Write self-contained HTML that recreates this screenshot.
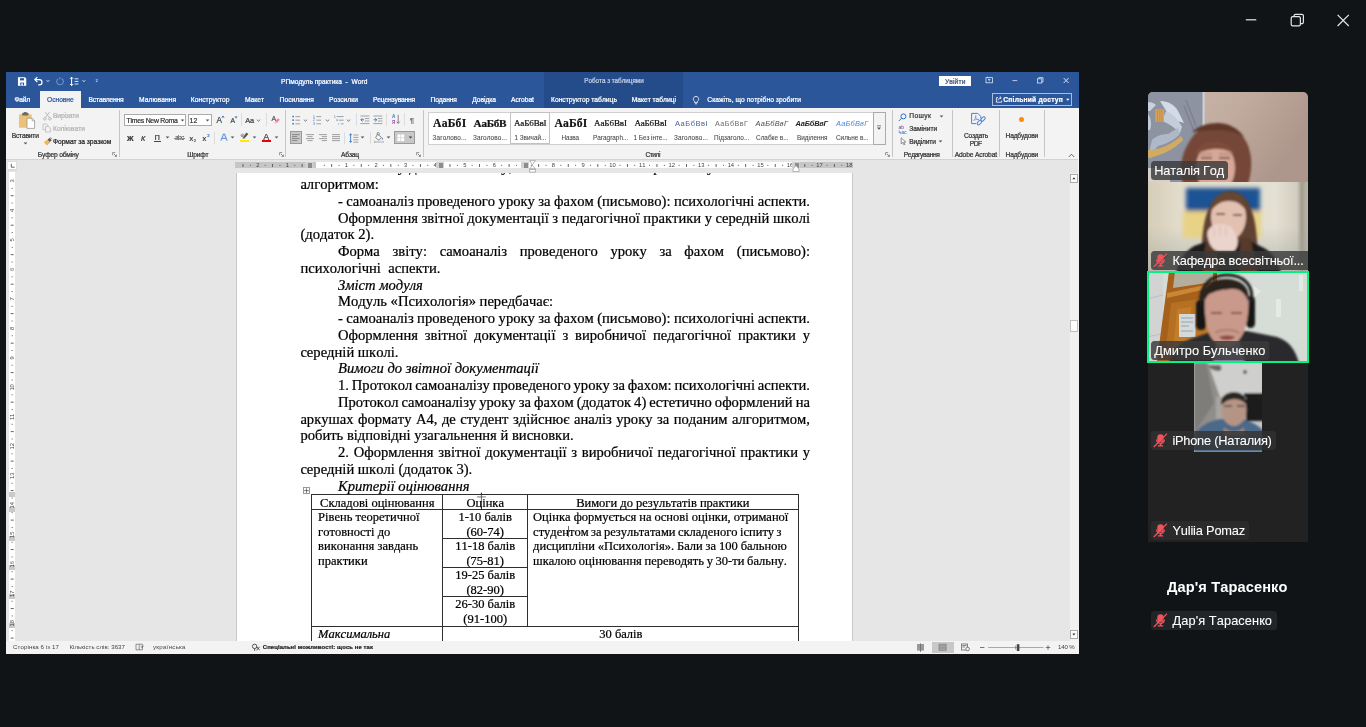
<!DOCTYPE html>
<html lang="uk"><head><meta charset="utf-8"><title>Zoom</title><style>
html,body{margin:0;padding:0;}
body{width:1366px;height:727px;background:#111417;overflow:hidden;position:relative;font-family:"Liberation Sans",sans-serif;font-kerning:none;font-variant-ligatures:none;}
#root{position:absolute;left:0;top:0;width:1366px;height:727px;will-change:transform;}
.t{position:absolute;white-space:pre;line-height:1;-webkit-text-stroke:.22px currentColor;}
.r{position:absolute;display:block;}
.j{position:absolute;white-space:normal;text-align:justify;text-align-last:justify;line-height:1;font-family:"Liberation Serif",serif;color:#000;}
</style></head><body><div id="root">
<svg class="r" style="left:1240.00px;top:8.00px;" width="116" height="24" viewBox="0 0 116 24"><g fill="none" stroke="#e6e6e6" stroke-width="1.2"><path d="M5.8 11.8H16.3"/><rect x="51.2" y="8.6" width="9.2" height="9.2" rx="1.6"/><path d="M54 8.4V7.9a1.6 1.6 0 0 1 1.6-1.6h6.2a1.6 1.6 0 0 1 1.6 1.6v6.2a1.6 1.6 0 0 1-1.6 1.6h-1.2"/><path d="M97.6 6.8L108.8 18M108.8 6.8L97.6 18"/></g></svg>
<div class="r" style="left:6.00px;top:72.00px;width:1073.00px;height:582.00px;background:#e6e6e6;"></div>
<div class="r" style="left:6.00px;top:72.00px;width:1073.00px;height:36.00px;background:#2b579a;"></div>
<div class="r" style="left:544.00px;top:72.00px;width:139.00px;height:36.00px;background:#254c8a;"></div>
<div class="r" style="left:6.00px;top:108.00px;width:1073.00px;height:51.00px;background:#f3f3f3;"></div>
<div class="r" style="left:6.00px;top:158.60px;width:1073.00px;height:1.00px;background:#d2d2d2;"></div>
<div class="r" style="left:40.00px;top:91.00px;width:41.00px;height:17.50px;background:#f3f3f3;"></div>
<div class="r" style="left:6.00px;top:641.00px;width:1073.00px;height:13.00px;background:#f3f3f3;"></div>
<div class="r" style="left:1078.00px;top:108.00px;width:1.00px;height:533.00px;background:#f6f6f6;"></div>
<div class="r" style="left:235.50px;top:173.00px;width:617.80px;height:468.00px;background:#ffffff;border-left:1px solid #c8c8c8;border-right:1px solid #c8c8c8;box-sizing:border-box;"></div>
<div class="r" style="left:234.50px;top:162.20px;width:618.50px;height:6.20px;background:#c6c6c6;"></div>
<div class="r" style="left:316.40px;top:162.20px;width:475.50px;height:6.20px;background:#ffffff;"></div>
<svg class="r" style="left:234.50px;top:162.20px;font-family:&quot;Liberation Sans&quot;,sans-serif;" width="618.5" height="6" viewBox="0 0 618.5 6"><rect x="7.52" y="2.0" width="0.9" height="3.0" fill="#555"/><rect x="14.92" y="2.8" width="0.9" height="1.2" fill="#666"/><text x="22.76" y="5.1" font-size="5.8" text-anchor="middle" fill="#444">2</text><rect x="29.70" y="2.8" width="0.9" height="1.2" fill="#666"/><rect x="37.09" y="2.0" width="0.9" height="3.0" fill="#555"/><rect x="44.49" y="2.8" width="0.9" height="1.2" fill="#666"/><text x="52.33" y="5.1" font-size="5.8" text-anchor="middle" fill="#444">1</text><rect x="59.27" y="2.8" width="0.9" height="1.2" fill="#666"/><rect x="66.66" y="2.0" width="0.9" height="3.0" fill="#555"/><rect x="74.06" y="2.8" width="0.9" height="1.2" fill="#666"/><rect x="88.84" y="2.8" width="0.9" height="1.2" fill="#666"/><rect x="96.23" y="2.0" width="0.9" height="3.0" fill="#555"/><rect x="103.63" y="2.8" width="0.9" height="1.2" fill="#666"/><text x="111.47" y="5.1" font-size="5.8" text-anchor="middle" fill="#444">1</text><rect x="118.41" y="2.8" width="0.9" height="1.2" fill="#666"/><rect x="125.80" y="2.0" width="0.9" height="3.0" fill="#555"/><rect x="133.20" y="2.8" width="0.9" height="1.2" fill="#666"/><text x="141.04" y="5.1" font-size="5.8" text-anchor="middle" fill="#444">2</text><rect x="147.98" y="2.8" width="0.9" height="1.2" fill="#666"/><rect x="155.38" y="2.0" width="0.9" height="3.0" fill="#555"/><rect x="162.77" y="2.8" width="0.9" height="1.2" fill="#666"/><text x="170.61" y="5.1" font-size="5.8" text-anchor="middle" fill="#444">3</text><rect x="177.55" y="2.8" width="0.9" height="1.2" fill="#666"/><rect x="184.94" y="2.0" width="0.9" height="3.0" fill="#555"/><rect x="192.34" y="2.8" width="0.9" height="1.2" fill="#666"/><text x="200.18" y="5.1" font-size="5.8" text-anchor="middle" fill="#444">4</text><rect x="207.12" y="2.8" width="0.9" height="1.2" fill="#666"/><rect x="214.51" y="2.0" width="0.9" height="3.0" fill="#555"/><rect x="221.91" y="2.8" width="0.9" height="1.2" fill="#666"/><text x="229.75" y="5.1" font-size="5.8" text-anchor="middle" fill="#444">5</text><rect x="236.69" y="2.8" width="0.9" height="1.2" fill="#666"/><rect x="244.08" y="2.0" width="0.9" height="3.0" fill="#555"/><rect x="251.48" y="2.8" width="0.9" height="1.2" fill="#666"/><text x="259.32" y="5.1" font-size="5.8" text-anchor="middle" fill="#444">6</text><rect x="266.26" y="2.8" width="0.9" height="1.2" fill="#666"/><rect x="273.66" y="2.0" width="0.9" height="3.0" fill="#555"/><rect x="281.05" y="2.8" width="0.9" height="1.2" fill="#666"/><text x="288.89" y="5.1" font-size="5.8" text-anchor="middle" fill="#444">7</text><rect x="295.83" y="2.8" width="0.9" height="1.2" fill="#666"/><rect x="303.22" y="2.0" width="0.9" height="3.0" fill="#555"/><rect x="310.62" y="2.8" width="0.9" height="1.2" fill="#666"/><text x="318.46" y="5.1" font-size="5.8" text-anchor="middle" fill="#444">8</text><rect x="325.40" y="2.8" width="0.9" height="1.2" fill="#666"/><rect x="332.80" y="2.0" width="0.9" height="3.0" fill="#555"/><rect x="340.19" y="2.8" width="0.9" height="1.2" fill="#666"/><text x="348.03" y="5.1" font-size="5.8" text-anchor="middle" fill="#444">9</text><rect x="354.97" y="2.8" width="0.9" height="1.2" fill="#666"/><rect x="362.37" y="2.0" width="0.9" height="3.0" fill="#555"/><rect x="369.76" y="2.8" width="0.9" height="1.2" fill="#666"/><text x="377.60" y="5.1" font-size="5.8" text-anchor="middle" fill="#444">10</text><rect x="384.54" y="2.8" width="0.9" height="1.2" fill="#666"/><rect x="391.94" y="2.0" width="0.9" height="3.0" fill="#555"/><rect x="399.33" y="2.8" width="0.9" height="1.2" fill="#666"/><text x="407.17" y="5.1" font-size="5.8" text-anchor="middle" fill="#444">11</text><rect x="414.11" y="2.8" width="0.9" height="1.2" fill="#666"/><rect x="421.50" y="2.0" width="0.9" height="3.0" fill="#555"/><rect x="428.90" y="2.8" width="0.9" height="1.2" fill="#666"/><text x="436.74" y="5.1" font-size="5.8" text-anchor="middle" fill="#444">12</text><rect x="443.68" y="2.8" width="0.9" height="1.2" fill="#666"/><rect x="451.07" y="2.0" width="0.9" height="3.0" fill="#555"/><rect x="458.47" y="2.8" width="0.9" height="1.2" fill="#666"/><text x="466.31" y="5.1" font-size="5.8" text-anchor="middle" fill="#444">13</text><rect x="473.25" y="2.8" width="0.9" height="1.2" fill="#666"/><rect x="480.65" y="2.0" width="0.9" height="3.0" fill="#555"/><rect x="488.04" y="2.8" width="0.9" height="1.2" fill="#666"/><text x="495.88" y="5.1" font-size="5.8" text-anchor="middle" fill="#444">14</text><rect x="502.82" y="2.8" width="0.9" height="1.2" fill="#666"/><rect x="510.21" y="2.0" width="0.9" height="3.0" fill="#555"/><rect x="517.61" y="2.8" width="0.9" height="1.2" fill="#666"/><text x="525.45" y="5.1" font-size="5.8" text-anchor="middle" fill="#444">15</text><rect x="532.39" y="2.8" width="0.9" height="1.2" fill="#666"/><rect x="539.78" y="2.0" width="0.9" height="3.0" fill="#555"/><rect x="547.18" y="2.8" width="0.9" height="1.2" fill="#666"/><text x="555.02" y="5.1" font-size="5.8" text-anchor="middle" fill="#444">16</text><rect x="561.96" y="2.8" width="0.9" height="1.2" fill="#666"/><rect x="569.36" y="2.0" width="0.9" height="3.0" fill="#555"/><rect x="576.75" y="2.8" width="0.9" height="1.2" fill="#666"/><text x="584.59" y="5.1" font-size="5.8" text-anchor="middle" fill="#444">17</text><rect x="591.53" y="2.8" width="0.9" height="1.2" fill="#666"/><rect x="598.92" y="2.0" width="0.9" height="3.0" fill="#555"/><rect x="606.32" y="2.8" width="0.9" height="1.2" fill="#666"/><text x="614.16" y="5.1" font-size="5.8" text-anchor="middle" fill="#444">18</text></svg>
<div class="r" style="left:304.60px;top:162.20px;width:8.40px;height:6.20px;background:#d2d2d2;"></div>
<div class="r" style="left:307.90px;top:163.10px;width:4.20px;height:4.50px;background:#8c8c8c;"></div>
<div class="r" style="left:435.80px;top:162.20px;width:8.40px;height:6.20px;background:#d2d2d2;"></div>
<div class="r" style="left:439.10px;top:163.10px;width:4.20px;height:4.50px;background:#8c8c8c;"></div>
<div class="r" style="left:520.60px;top:162.20px;width:8.40px;height:6.20px;background:#d2d2d2;"></div>
<div class="r" style="left:523.90px;top:163.10px;width:4.20px;height:4.50px;background:#8c8c8c;"></div>
<div class="r" style="left:791.60px;top:162.20px;width:8.40px;height:6.20px;background:#d2d2d2;"></div>
<div class="r" style="left:794.90px;top:163.10px;width:4.20px;height:4.50px;background:#8c8c8c;"></div>
<svg class="r" style="left:528.70px;top:160.30px;" width="7" height="13" viewBox="0 0 7 13"><path d="M.6 .6h5.800L3.500 4.800zM3.500 5.400L6.400 8.800H.6zM.6 9.400h5.800v2.800H.6z" fill="#fdfdfd" stroke="#8a8a8a" stroke-width=".6"/></svg>
<svg class="r" style="left:791.50px;top:165.00px;" width="8" height="8" viewBox="0 0 8 8"><path d="M4 .6L7 4v2.6H1V4z" fill="#fdfdfd" stroke="#8a8a8a" stroke-width=".6"/></svg>
<div class="r" style="left:7.60px;top:160.80px;width:9.90px;height:9.80px;background:#dcdcdc;"></div>
<div class="r" style="left:8.40px;top:161.60px;width:7.80px;height:7.80px;background:#ffffff;"></div>
<svg class="r" style="left:9.60px;top:163.00px;" width="6" height="6" viewBox="0 0 6 6"><path d="M1.3 .8V4.2H4.6" stroke="#666" stroke-width="1" fill="none"/></svg>
<div class="r" style="left:8.80px;top:171.50px;width:6.20px;height:469.50px;background:#ffffff;"></div>
<div class="r" style="left:8.80px;top:491.80px;width:6.20px;height:5.20px;background:#c9c9c9;"></div>
<div class="r" style="left:8.80px;top:507.10px;width:6.20px;height:5.20px;background:#c9c9c9;"></div>
<div class="r" style="left:8.80px;top:535.80px;width:6.20px;height:5.20px;background:#c9c9c9;"></div>
<div class="r" style="left:8.80px;top:564.80px;width:6.20px;height:5.20px;background:#c9c9c9;"></div>
<div class="r" style="left:8.80px;top:593.60px;width:6.20px;height:5.20px;background:#c9c9c9;"></div>
<div class="r" style="left:8.80px;top:623.20px;width:6.20px;height:5.20px;background:#c9c9c9;"></div>
<svg class="r" style="left:8.80px;top:171.50px;font-family:&quot;Liberation Sans&quot;,sans-serif;" width="6.2" height="469.5" viewBox="0 0 6.2 469.5"><text transform="translate(5.0 8.50) rotate(-90)" font-size="5.8" text-anchor="middle" fill="#444">3</text><rect x="2.6" y="15.44" width="1.2" height="0.9" fill="#666"/><rect x="1.7" y="22.83" width="3.0" height="0.9" fill="#555"/><rect x="2.6" y="30.21" width="1.2" height="0.9" fill="#666"/><text transform="translate(5.0 38.05) rotate(-90)" font-size="5.8" text-anchor="middle" fill="#444">4</text><rect x="2.6" y="44.99" width="1.2" height="0.9" fill="#666"/><rect x="1.7" y="52.37" width="3.0" height="0.9" fill="#555"/><rect x="2.6" y="59.76" width="1.2" height="0.9" fill="#666"/><text transform="translate(5.0 67.60) rotate(-90)" font-size="5.8" text-anchor="middle" fill="#444">5</text><rect x="2.6" y="74.54" width="1.2" height="0.9" fill="#666"/><rect x="1.7" y="81.92" width="3.0" height="0.9" fill="#555"/><rect x="2.6" y="89.31" width="1.2" height="0.9" fill="#666"/><text transform="translate(5.0 97.15) rotate(-90)" font-size="5.8" text-anchor="middle" fill="#444">6</text><rect x="2.6" y="104.09" width="1.2" height="0.9" fill="#666"/><rect x="1.7" y="111.48" width="3.0" height="0.9" fill="#555"/><rect x="2.6" y="118.86" width="1.2" height="0.9" fill="#666"/><text transform="translate(5.0 126.70) rotate(-90)" font-size="5.8" text-anchor="middle" fill="#444">7</text><rect x="2.6" y="133.64" width="1.2" height="0.9" fill="#666"/><rect x="1.7" y="141.03" width="3.0" height="0.9" fill="#555"/><rect x="2.6" y="148.41" width="1.2" height="0.9" fill="#666"/><text transform="translate(5.0 156.25) rotate(-90)" font-size="5.8" text-anchor="middle" fill="#444">8</text><rect x="2.6" y="163.19" width="1.2" height="0.9" fill="#666"/><rect x="1.7" y="170.57" width="3.0" height="0.9" fill="#555"/><rect x="2.6" y="177.96" width="1.2" height="0.9" fill="#666"/><text transform="translate(5.0 185.80) rotate(-90)" font-size="5.8" text-anchor="middle" fill="#444">9</text><rect x="2.6" y="192.74" width="1.2" height="0.9" fill="#666"/><rect x="1.7" y="200.13" width="3.0" height="0.9" fill="#555"/><rect x="2.6" y="207.51" width="1.2" height="0.9" fill="#666"/><text transform="translate(5.0 215.35) rotate(-90)" font-size="5.8" text-anchor="middle" fill="#444">10</text><rect x="2.6" y="222.29" width="1.2" height="0.9" fill="#666"/><rect x="1.7" y="229.68" width="3.0" height="0.9" fill="#555"/><rect x="2.6" y="237.06" width="1.2" height="0.9" fill="#666"/><text transform="translate(5.0 244.90) rotate(-90)" font-size="5.8" text-anchor="middle" fill="#444">11</text><rect x="2.6" y="251.84" width="1.2" height="0.9" fill="#666"/><rect x="1.7" y="259.23" width="3.0" height="0.9" fill="#555"/><rect x="2.6" y="266.61" width="1.2" height="0.9" fill="#666"/><text transform="translate(5.0 274.45) rotate(-90)" font-size="5.8" text-anchor="middle" fill="#444">12</text><rect x="2.6" y="281.39" width="1.2" height="0.9" fill="#666"/><rect x="1.7" y="288.78" width="3.0" height="0.9" fill="#555"/><rect x="2.6" y="296.16" width="1.2" height="0.9" fill="#666"/><text transform="translate(5.0 304.00) rotate(-90)" font-size="5.8" text-anchor="middle" fill="#444">13</text><rect x="2.6" y="310.94" width="1.2" height="0.9" fill="#666"/><rect x="1.7" y="318.33" width="3.0" height="0.9" fill="#555"/><rect x="2.6" y="325.71" width="1.2" height="0.9" fill="#666"/><text transform="translate(5.0 333.55) rotate(-90)" font-size="5.8" text-anchor="middle" fill="#444">14</text><rect x="2.6" y="340.49" width="1.2" height="0.9" fill="#666"/><rect x="1.7" y="347.88" width="3.0" height="0.9" fill="#555"/><rect x="2.6" y="355.26" width="1.2" height="0.9" fill="#666"/><text transform="translate(5.0 363.10) rotate(-90)" font-size="5.8" text-anchor="middle" fill="#444">15</text><rect x="2.6" y="370.04" width="1.2" height="0.9" fill="#666"/><rect x="1.7" y="377.43" width="3.0" height="0.9" fill="#555"/><rect x="2.6" y="384.81" width="1.2" height="0.9" fill="#666"/><text transform="translate(5.0 392.65) rotate(-90)" font-size="5.8" text-anchor="middle" fill="#444">16</text><rect x="2.6" y="399.59" width="1.2" height="0.9" fill="#666"/><rect x="1.7" y="406.97" width="3.0" height="0.9" fill="#555"/><rect x="2.6" y="414.36" width="1.2" height="0.9" fill="#666"/><text transform="translate(5.0 422.20) rotate(-90)" font-size="5.8" text-anchor="middle" fill="#444">17</text><rect x="2.6" y="429.14" width="1.2" height="0.9" fill="#666"/><rect x="1.7" y="436.53" width="3.0" height="0.9" fill="#555"/><rect x="2.6" y="443.91" width="1.2" height="0.9" fill="#666"/><text transform="translate(5.0 451.75) rotate(-90)" font-size="5.8" text-anchor="middle" fill="#444">18</text><rect x="2.6" y="458.69" width="1.2" height="0.9" fill="#666"/><rect x="1.7" y="466.08" width="3.0" height="0.9" fill="#555"/></svg>
<div class="r" style="left:1069.50px;top:173.00px;width:9.00px;height:468.00px;background:#f1f1f1;"></div>
<div class="r" style="left:1070.20px;top:174.20px;width:7.80px;height:8.40px;background:#ffffff;border:1px solid #ababab;box-sizing:border-box;"></div>
<svg class="r" style="left:1070.20px;top:174.20px;" width="7.8" height="8.4" viewBox="0 0 7.8 8.4"><path d="M2.3 5.2L3.9 3.2L5.5 5.2z" fill="#333"/></svg>
<div class="r" style="left:1070.20px;top:630.20px;width:7.80px;height:8.80px;background:#ffffff;border:1px solid #ababab;box-sizing:border-box;"></div>
<svg class="r" style="left:1070.20px;top:630.20px;" width="7.8" height="8.8" viewBox="0 0 7.8 8.8"><path d="M2.3 3.5L3.9 5.5L5.5 3.5z" fill="#333"/></svg>
<div class="r" style="left:1070.20px;top:320.00px;width:7.80px;height:12.00px;background:#ffffff;border:1px solid #c0c0c0;box-sizing:border-box;"></div>
<div class="r" style="left:0;top:173px;width:1366px;height:5px;overflow:hidden;">
<span class="t" style="left:300.40px;top:-13.00px;font-size:14.60px;color:#000;font-family:'Liberation Serif', serif;word-spacing:0.371px;">Він має внести у два самоаналізу, а потім вона сама обирала тему заняття за нею</span>
</div>
<span class="t" style="left:300.40px;top:177.00px;font-size:14.60px;color:#000;font-family:'Liberation Serif', serif;">алгоритмом:</span>
<span class="t" style="left:338.00px;top:194.00px;font-size:14.60px;color:#000;font-family:'Liberation Serif', serif;word-spacing:-0.210px;">- самоаналіз проведеного уроку за фахом (письмово): психологічні аспекти.</span>
<span class="t" style="left:338.00px;top:211.00px;font-size:14.60px;color:#000;font-family:'Liberation Serif', serif;word-spacing:-0.049px;">Оформлення звітної документації з педагогічної практики у середній школі</span>
<span class="t" style="left:300.40px;top:227.00px;font-size:14.60px;color:#000;font-family:'Liberation Serif', serif;">(додаток 2).</span>
<span class="t" style="left:338.00px;top:244.00px;font-size:14.60px;color:#000;font-family:'Liberation Serif', serif;word-spacing:9.038px;">Форма звіту: самоаналіз проведеного уроку за фахом (письмово):</span>
<span class="t" style="left:300.40px;top:261.00px;font-size:14.60px;color:#000;font-family:'Liberation Serif', serif;">психологічні  аспекти.</span>
<span class="t" style="left:338.00px;top:278.00px;font-size:14.60px;color:#000;font-family:'Liberation Serif', serif;font-style:italic;">Зміст модуля</span>
<span class="t" style="left:338.00px;top:294.00px;font-size:14.60px;color:#000;font-family:'Liberation Serif', serif;">Модуль «Психологія» передбачає:</span>
<span class="t" style="left:338.00px;top:311.00px;font-size:14.60px;color:#000;font-family:'Liberation Serif', serif;word-spacing:-0.210px;">- самоаналіз проведеного уроку за фахом (письмово): психологічні аспекти.</span>
<span class="t" style="left:338.00px;top:328.00px;font-size:14.60px;color:#000;font-family:'Liberation Serif', serif;word-spacing:3.289px;">Оформлення звітної документації з виробничої педагогічної практики у</span>
<span class="t" style="left:300.40px;top:345.00px;font-size:14.60px;color:#000;font-family:'Liberation Serif', serif;">середній школі.</span>
<span class="t" style="left:338.00px;top:361.00px;font-size:14.60px;color:#000;font-family:'Liberation Serif', serif;font-style:italic;">Вимоги до звітної документації</span>
<span class="t" style="left:338.00px;top:378.00px;font-size:14.60px;color:#000;font-family:'Liberation Serif', serif;word-spacing:-0.794px;">1. Протокол самоаналізу проведеного уроку за фахом: психологічні аспекти.</span>
<span class="t" style="left:338.00px;top:395.00px;font-size:14.60px;color:#000;font-family:'Liberation Serif', serif;word-spacing:-0.574px;">Протокол самоаналізу уроку за фахом (додаток 4) естетично оформлений на</span>
<span class="t" style="left:300.40px;top:412.00px;font-size:14.60px;color:#000;font-family:'Liberation Serif', serif;word-spacing:0.816px;">аркушах формату А4, де студент здійснює аналіз уроку за поданим алгоритмом,</span>
<span class="t" style="left:300.40px;top:428.00px;font-size:14.60px;color:#000;font-family:'Liberation Serif', serif;">робить відповідні узагальнення й висновки.</span>
<span class="t" style="left:338.00px;top:445.00px;font-size:14.60px;color:#000;font-family:'Liberation Serif', serif;word-spacing:1.053px;">2. Оформлення звітної документації з виробничої педагогічної практики у</span>
<span class="t" style="left:300.40px;top:462.00px;font-size:14.60px;color:#000;font-family:'Liberation Serif', serif;">середній школі (додаток 3).</span>
<span class="t" style="left:338.00px;top:479.00px;font-size:14.60px;color:#000;font-family:'Liberation Serif', serif;font-style:italic;">Критерії оцінювання</span>
<div class="r" style="left:311.20px;top:493.95px;width:487.10px;height:0.90px;background:#2e2e2e;"></div>
<div class="r" style="left:311.20px;top:509.15px;width:487.10px;height:0.90px;background:#2e2e2e;"></div>
<div class="r" style="left:311.20px;top:625.65px;width:487.10px;height:0.90px;background:#2e2e2e;"></div>
<div class="r" style="left:442.50px;top:537.95px;width:84.80px;height:0.90px;background:#2e2e2e;"></div>
<div class="r" style="left:442.50px;top:566.95px;width:84.80px;height:0.90px;background:#2e2e2e;"></div>
<div class="r" style="left:442.50px;top:595.75px;width:84.80px;height:0.90px;background:#2e2e2e;"></div>
<div class="r" style="left:310.75px;top:494.40px;width:0.90px;height:146.60px;background:#2e2e2e;"></div>
<div class="r" style="left:442.05px;top:494.40px;width:0.90px;height:146.60px;background:#2e2e2e;"></div>
<div class="r" style="left:526.85px;top:494.40px;width:0.90px;height:131.40px;background:#2e2e2e;"></div>
<div class="r" style="left:797.85px;top:494.40px;width:0.90px;height:146.60px;background:#2e2e2e;"></div>
<span class="t" style="left:320.09px;top:497.00px;font-size:12.50px;color:#000;font-family:'Liberation Serif', serif;">Складові оцінювання</span>
<span class="t" style="left:466.45px;top:497.00px;font-size:12.50px;color:#000;font-family:'Liberation Serif', serif;">Оцінка</span>
<span class="t" style="left:576.18px;top:497.00px;font-size:12.50px;color:#000;font-family:'Liberation Serif', serif;">Вимоги до результатів практики</span>
<span class="t" style="left:318.10px;top:511.00px;font-size:12.50px;color:#000;font-family:'Liberation Serif', serif;">Рівень теоретичної</span>
<span class="t" style="left:318.10px;top:526.00px;font-size:12.50px;color:#000;font-family:'Liberation Serif', serif;">готовності до</span>
<span class="t" style="left:318.10px;top:540.00px;font-size:12.50px;color:#000;font-family:'Liberation Serif', serif;">виконання завдань</span>
<span class="t" style="left:318.10px;top:555.00px;font-size:12.50px;color:#000;font-family:'Liberation Serif', serif;">практики</span>
<span class="t" style="left:458.42px;top:511.00px;font-size:12.50px;color:#000;font-family:'Liberation Serif', serif;">1-10 балів</span>
<span class="t" style="left:466.46px;top:526.00px;font-size:12.50px;color:#000;font-family:'Liberation Serif', serif;">(60-74)</span>
<span class="t" style="left:455.30px;top:540.00px;font-size:12.50px;color:#000;font-family:'Liberation Serif', serif;">11-18 балів</span>
<span class="t" style="left:466.46px;top:555.00px;font-size:12.50px;color:#000;font-family:'Liberation Serif', serif;">(75-81)</span>
<span class="t" style="left:455.30px;top:569.00px;font-size:12.50px;color:#000;font-family:'Liberation Serif', serif;">19-25 балів</span>
<span class="t" style="left:466.46px;top:584.00px;font-size:12.50px;color:#000;font-family:'Liberation Serif', serif;">(82-90)</span>
<span class="t" style="left:455.30px;top:598.00px;font-size:12.50px;color:#000;font-family:'Liberation Serif', serif;">26-30 балів</span>
<span class="t" style="left:463.33px;top:613.00px;font-size:12.50px;color:#000;font-family:'Liberation Serif', serif;">(91-100)</span>
<span class="t" style="left:533.10px;top:511.00px;font-size:12.50px;color:#000;font-family:'Liberation Serif', serif;word-spacing:-0.075px;">Оцінка формується на основі оцінки, отриманої</span>
<span class="t" style="left:533.10px;top:526.00px;font-size:12.50px;color:#000;font-family:'Liberation Serif', serif;word-spacing:-0.684px;">студентом за результатами складеного іспиту з</span>
<span class="t" style="left:533.10px;top:540.00px;font-size:12.50px;color:#000;font-family:'Liberation Serif', serif;word-spacing:-0.185px;">дисципліни «Психологія». Бали за 100 бальною</span>
<span class="t" style="left:533.10px;top:555.00px;font-size:12.50px;color:#000;font-family:'Liberation Serif', serif;word-spacing:-0.451px;">шкалою оцінювання переводять у 30-ти бальну.</span>
<span class="t" style="left:318.10px;top:628.00px;font-size:12.50px;color:#000;font-family:'Liberation Serif', serif;font-style:italic;">Максимальна</span>
<span class="t" style="left:599.33px;top:628.00px;font-size:12.50px;color:#000;font-family:'Liberation Serif', serif;">30 балів</span>
<div class="r" style="left:303.40px;top:486.80px;width:7.00px;height:7.20px;background:#fdfdfd;border:1px solid #9a9a9a;box-sizing:border-box;"></div>
<svg class="r" style="left:303.40px;top:486.80px;" width="7" height="7.2" viewBox="0 0 7 7.2"><path d="M3.5 1.3V5.9M1.2 3.6H5.8" stroke="#555" stroke-width=".8"/></svg>
<svg class="r" style="left:476.00px;top:492.00px;" width="11" height="16.5" viewBox="0 0 11 16.5"><path d="M5.400 .5V15.800" stroke="#222" stroke-width=".7"/><path d="M1 4.900h8.800" stroke="#555" stroke-width=".8"/><path d="M4.300 2.600h2.200L5.400 1z" fill="#222"/></svg>
<div class="r" style="left:568.30px;top:525.50px;width:0.70px;height:11.50px;background:#666;"></div>
<div class="r" style="left:6.00px;top:641.00px;width:1073.00px;height:13.00px;background:#f3f3f3;"></div>
<svg class="r" style="left:17.00px;top:76.00px;" width="84" height="11" viewBox="0 0 84 11"><g fill="none" stroke="#fff" stroke-width="1"><path d="M1.5 1.800h6.200l1 1v6.400H1.500z" stroke-width="1.100" fill="#fff"/><rect x="3" y="2.200" width="4" height="2.200" fill="#2b579a" stroke="none"/><rect x="3.200" y="6.600" width="3.800" height="2.800" fill="#2b579a" stroke="none"/><rect x="4.300" y="7.400" width="1.600" height="2" fill="#fff" stroke="none"/><path d="M18.2 3.6h4.2a2.6 2.6 0 0 1 0 5.2h-1.2" stroke-width="1.2"/><path d="M20.3 1.2L17.9 3.6l2.4 2.4" stroke-width="1.2"/><path d="M29.6 4.3l1.3 1.3 1.3-1.3" stroke-width=".9"/><path d="M44.6 2.6a3.3 3.3 0 1 1-3.6.3" stroke="#6f92c9" stroke-width="1.1"/><path d="M42.8 1v2.4" stroke="#6f92c9" stroke-width="1"/><path d="M54.6 1.2v8.4M53 2.8l1.6-1.6 1.6 1.6M53 8l1.6 1.6L56.2 8" stroke-width="1"/><path d="M57.6 2.8h3.8M57.6 5.4h3.8M57.6 8h3.8" stroke-width="1" stroke="#dfe7f4"/><path d="M65.6 4.3l1.3 1.3 1.3-1.3" stroke-width=".9"/><path d="M78.7 3.7h2.2" stroke-width=".7" stroke="#c9d6ea"/><path d="M78.6 4.8h2.4l-1.2 1.4z" fill="#c9d6ea" stroke="none"/></g></svg>
<span class="t" style="left:281.00px;top:79.00px;font-size:6.60px;color:#ffffff;letter-spacing:0.016px;">РПмодуль практика  -  Word</span>
<span class="t" style="left:584.30px;top:78.00px;font-size:6.30px;color:#c3d0e6;letter-spacing:-0.015px;">Робота з таблицями</span>
<div class="r" style="left:939.00px;top:76.40px;width:31.50px;height:9.40px;background:#ffffff;"></div>
<span class="t" style="left:945.00px;top:79.00px;font-size:6.70px;color:#3d4f74;letter-spacing:0.108px;">Увійти</span>
<svg class="r" style="left:984.00px;top:75.00px;" width="90" height="12" viewBox="0 0 90 12"><g fill="none" stroke="#dbe4f3" stroke-width=".8"><rect x="2" y="2.6" width="6.4" height="5.2"/><path d="M3.6 2.6V1.6M5.2 6.4V4M4 5l1.2-1.2L6.4 5" stroke-width=".8"/><path d="M28.4 5.6h4.8"/><rect x="53.6" y="3.8" width="4.2" height="4.2"/><path d="M54.8 3.8V2.6H59v4.2h-1.2"/><path d="M79.6 3l5 5M84.6 3l-5 5" stroke-width="1"/></g></svg>
<span class="t" style="left:14.50px;top:97.00px;font-size:6.70px;color:#ffffff;letter-spacing:-0.224px;">Файл</span>
<span class="t" style="left:88.60px;top:97.00px;font-size:6.70px;color:#ffffff;letter-spacing:-0.182px;">Вставлення</span>
<span class="t" style="left:139.00px;top:97.00px;font-size:6.70px;color:#ffffff;letter-spacing:0.093px;">Малювання</span>
<span class="t" style="left:190.70px;top:97.00px;font-size:6.70px;color:#ffffff;letter-spacing:0.062px;">Конструктор</span>
<span class="t" style="left:245.00px;top:97.00px;font-size:6.70px;color:#ffffff;letter-spacing:-0.009px;">Макет</span>
<span class="t" style="left:279.60px;top:97.00px;font-size:6.70px;color:#ffffff;letter-spacing:0.013px;">Посилання</span>
<span class="t" style="left:329.00px;top:97.00px;font-size:6.70px;color:#ffffff;letter-spacing:0.008px;">Розсилки</span>
<span class="t" style="left:373.00px;top:97.00px;font-size:6.70px;color:#ffffff;letter-spacing:-0.172px;">Рецензування</span>
<span class="t" style="left:430.50px;top:97.00px;font-size:6.70px;color:#ffffff;letter-spacing:-0.118px;">Подання</span>
<span class="t" style="left:472.30px;top:97.00px;font-size:6.70px;color:#ffffff;letter-spacing:-0.030px;">Довідка</span>
<span class="t" style="left:511.00px;top:97.00px;font-size:6.70px;color:#ffffff;letter-spacing:-0.015px;">Acrobat</span>
<span class="t" style="left:551.00px;top:97.00px;font-size:6.70px;color:#ffffff;letter-spacing:0.014px;">Конструктор таблиць</span>
<span class="t" style="left:631.80px;top:97.00px;font-size:6.70px;color:#ffffff;letter-spacing:-0.026px;">Макет таблиці</span>
<span class="t" style="left:707.30px;top:97.00px;font-size:6.70px;color:#ffffff;letter-spacing:0.051px;">Скажіть, що потрібно зробити</span>
<span class="t" style="left:47.00px;top:97.00px;font-size:6.70px;color:#2b579a;letter-spacing:-0.029px;">Основне</span>
<svg class="r" style="left:692.00px;top:94.50px;" width="8" height="11" viewBox="0 0 8 11"><g fill="none" stroke="#fff" stroke-width=".8"><path d="M2.6 6.4a2.7 2.7 0 1 1 2.8 0v1.2H2.6z"/><path d="M2.9 8.8h2.2"/></g></svg>
<div class="r" style="left:992.20px;top:92.80px;width:80.00px;height:12.80px;background:transparent;border:1px solid rgba(255,255,255,.6);box-sizing:border-box;"></div>
<svg class="r" style="left:994.60px;top:95.20px;" width="8" height="8" viewBox="0 0 8 8"><g fill="none" stroke="#fff" stroke-width=".8"><path d="M3 2.6H1.4v4.6h5.2V5.6"/><path d="M3 5.2c.3-1.6 1.4-2.4 3-2.4M4.8 1.4L6.3 2.8 4.8 4.2"/></g></svg>
<span class="t" style="left:1003.30px;top:97.00px;font-size:6.70px;color:#ffffff;font-weight:700;letter-spacing:0.222px;">Спільний доступ</span>
<svg class="r" style="left:1064.60px;top:98.00px;" width="6" height="4" viewBox="0 0 6 4"><path d="M1 .8h3.600L2.800 2.800z" fill="#fff"/></svg>
<span class="t" style="left:13.00px;top:644.00px;font-size:6.10px;color:#444;letter-spacing:0.121px;-webkit-text-stroke:0;">Сторінка 6 із 17</span>
<span class="t" style="left:69.50px;top:644.00px;font-size:6.10px;color:#444;letter-spacing:0.050px;-webkit-text-stroke:0;">Кількість слів: 3637</span>
<svg class="r" style="left:135.00px;top:643.40px;" width="10" height="8" viewBox="0 0 10 8"><g fill="none" stroke="#666" stroke-width=".7"><path d="M1 1.2h3.2v5.6H1zM4.2 1.2h3.2v5.6H4.2"/><path d="M6 3.4l1 1.2 1.6-2" stroke="#444"/></g></svg>
<span class="t" style="left:153.00px;top:644.00px;font-size:6.10px;color:#444;letter-spacing:0.294px;-webkit-text-stroke:0;">українська</span>
<svg class="r" style="left:250.50px;top:643.00px;" width="10" height="9" viewBox="0 0 10 9"><g fill="none" stroke="#333" stroke-width=".8"><circle cx="3.6" cy="3.4" r="2.2"/><path d="M5.6 3.6l3 3.6M8.6 3.8L5.4 7.4M3.6 5.6v2.2"/></g></svg>
<span class="t" style="left:262.80px;top:645.00px;font-size:5.90px;color:#222;font-weight:700;letter-spacing:0.104px;">Спеціальні можливості: щось не так</span>
<div class="r" style="left:932.00px;top:641.60px;width:22.00px;height:11.80px;background:#c8c8c8;"></div>
<svg class="r" style="left:915.00px;top:643.00px;" width="12" height="9" viewBox="0 0 12 9"><g fill="#9a9a9a"><rect x="2" y="1" width="3" height="6.6"/><rect x="6" y="1" width="3" height="6.6"/><rect x="5.1" y="0.4" width=".8" height="8.4" fill="#555"/></g></svg>
<svg class="r" style="left:937.00px;top:643.00px;" width="12" height="9" viewBox="0 0 12 9"><rect x="1.6" y=".8" width="8" height="7" fill="#8a8a8a"/><path d="M2.6 2.2h6M2.6 3.6h6M2.6 5h6M2.6 6.4h6" stroke="#b8b8b8" stroke-width=".6"/></svg>
<svg class="r" style="left:960.00px;top:643.00px;" width="12" height="9" viewBox="0 0 12 9"><g fill="none" stroke="#666" stroke-width=".8"><rect x="1.4" y="1" width="6.2" height="6"/><path d="M2.4 2.6h4.2M2.4 4h2.4"/><circle cx="7.6" cy="6" r="1.8" fill="#f3f3f3"/></g></svg>
<svg class="r" style="left:978.00px;top:643.00px;" width="76" height="9" viewBox="0 0 76 9"><g stroke="#555" stroke-width=".8" fill="none"><path d="M2 4.5h4.4"/><path d="M10 4.5h55.4" stroke="#8a8a8a" stroke-width=".7"/><path d="M37.6 2.6v3.8" stroke="#777" stroke-width=".7"/><path d="M67.8 4.5h4.4M70 2.3v4.4"/></g><rect x="38.8" y="1.2" width="2.6" height="6.8" fill="#444"/></svg>
<span class="t" style="left:1058.00px;top:644.00px;font-size:6.10px;color:#444;letter-spacing:-0.174px;-webkit-text-stroke:0;">140 %</span>
<div class="r" style="left:119.20px;top:110.00px;width:0.80px;height:47.00px;background:#c6c6c6;"></div>
<div class="r" style="left:285.20px;top:110.00px;width:0.80px;height:47.00px;background:#c6c6c6;"></div>
<div class="r" style="left:423.10px;top:110.00px;width:0.80px;height:47.00px;background:#c6c6c6;"></div>
<div class="r" style="left:892.00px;top:110.00px;width:0.80px;height:47.00px;background:#c6c6c6;"></div>
<div class="r" style="left:952.10px;top:110.00px;width:0.80px;height:47.00px;background:#c6c6c6;"></div>
<div class="r" style="left:998.90px;top:110.00px;width:0.80px;height:47.00px;background:#c6c6c6;"></div>
<div class="r" style="left:1043.90px;top:110.00px;width:0.80px;height:47.00px;background:#c6c6c6;"></div>
<svg class="r" style="left:18.00px;top:112.00px;" width="18" height="18" viewBox="0 0 18 18"><rect x="1" y="2.2" width="12.6" height="13.6" rx=".6" fill="#ecc27a"/><rect x="4.2" y=".8" width="6.2" height="2.8" rx=".6" fill="#6b6b6b"/><rect x="5.9" y=".1" width="2.8" height="1.6" rx=".7" fill="#6b6b6b"/><path d="M9 6.2h5l2.6 2.6v7.6H9z" fill="#fff" stroke="#8a8a8a" stroke-width=".7"/><path d="M14 6.2v2.6h2.6" fill="none" stroke="#8a8a8a" stroke-width=".6"/></svg>
<span class="t" style="left:11.70px;top:133.00px;font-size:6.70px;color:#333333;letter-spacing:-0.204px;">Вставити</span>
<svg class="r" style="left:22.80px;top:142.10px;" width="5" height="3" viewBox="0 0 5 3"><path d="M.7 .5h3.6L2.5 2.5z" fill="#555"/></svg>
<svg class="r" style="left:42.50px;top:110.50px;" width="9" height="10" viewBox="0 0 9 10"><g fill="none" stroke="#b0b0b0" stroke-width=".8"><path d="M2 .8l4.6 6M6.8.8L2.2 6.8"/><circle cx="1.9" cy="7.8" r="1.3"/><circle cx="6.9" cy="7.8" r="1.3"/></g></svg>
<span class="t" style="left:53.00px;top:113.00px;font-size:6.70px;color:#b4b4b4;letter-spacing:-0.148px;">Вирізати</span>
<svg class="r" style="left:42.00px;top:123.40px;" width="10" height="10" viewBox="0 0 10 10"><g fill="none" stroke="#b8b8b8" stroke-width=".8"><path d="M1 1h3.6l1.4 1.4v4.4H1z"/><path d="M3.6 3.4h3.2l1.6 1.6v4H3.6z" fill="#f3f3f3"/></g></svg>
<span class="t" style="left:53.00px;top:126.00px;font-size:6.70px;color:#b4b4b4;letter-spacing:0.017px;">Копіювати</span>
<svg class="r" style="left:42.50px;top:136.50px;" width="10" height="10" viewBox="0 0 10 10"><path d="M.8 5.2L4.4 2.4l2.8 3.4L3.8 8.6z" fill="#ecb85a"/><path d="M4.6 2.6l2-1.6 2 2.4-2 1.6z" fill="#555"/><path d="M7.2.4l1.6 1.8" stroke="#555" stroke-width=".9"/></svg>
<span class="t" style="left:53.00px;top:139.00px;font-size:6.70px;color:#222;letter-spacing:-0.058px;">Формат за зразком</span>
<span class="t" style="left:37.80px;top:152.00px;font-size:6.70px;color:#333333;letter-spacing:-0.189px;">Буфер обміну</span>
<svg class="r" style="left:112.00px;top:151.90px;" width="5" height="5" viewBox="0 0 5 5"><path d="M.6 3.2V.6H3.2M2 2l2.4 2.4M4.4 2.6v1.8H2.6" stroke="#666" stroke-width=".7" fill="none"/></svg>
<div class="r" style="left:124.30px;top:114.20px;width:62.00px;height:12.20px;background:#ffffff;border:1px solid #ababab;box-sizing:border-box;"></div>
<span class="t" style="left:126.50px;top:118.00px;font-size:6.90px;color:#333;letter-spacing:-0.256px;">Times New Roma</span>
<svg class="r" style="left:179.90px;top:119.10px;" width="5" height="3" viewBox="0 0 5 3"><path d="M.7 .5h3.6L2.5 2.5z" fill="#555"/></svg>
<div class="r" style="left:187.90px;top:114.20px;width:23.90px;height:12.20px;background:#ffffff;border:1px solid #ababab;box-sizing:border-box;"></div>
<span class="t" style="left:189.60px;top:118.00px;font-size:6.90px;color:#333;letter-spacing:0.125px;">12</span>
<svg class="r" style="left:204.90px;top:119.10px;" width="5" height="3" viewBox="0 0 5 3"><path d="M.7 .5h3.6L2.5 2.5z" fill="#555"/></svg>
<span class="t" style="left:216.40px;top:117.00px;font-size:8.20px;color:#444;">A</span>
<svg class="r" style="left:221.40px;top:115.20px;" width="4" height="3" viewBox="0 0 4 3"><path d="M.4 2.4L2 .5l1.6 1.9z" fill="#2b6fc4"/></svg>
<span class="t" style="left:230.40px;top:118.00px;font-size:6.80px;color:#444;">A</span>
<svg class="r" style="left:234.20px;top:115.60px;" width="4" height="3" viewBox="0 0 4 3"><path d="M.4 .5L2 2.4 3.6.5z" fill="#2b6fc4"/></svg>
<div class="r" style="left:240.60px;top:113.00px;width:0.80px;height:12.50px;background:#dcdcdc;"></div>
<span class="t" style="left:245.30px;top:117.00px;font-size:7.40px;color:#444;letter-spacing:-0.152px;">Aa</span>
<svg class="r" style="left:256.00px;top:119.30px;" width="5" height="3" viewBox="0 0 5 3"><path d="M.8 .6L2.5 2.2 4.2.6" stroke="#555" stroke-width=".8" fill="none"/></svg>
<div class="r" style="left:266.00px;top:113.00px;width:0.80px;height:12.50px;background:#dcdcdc;"></div>
<span class="t" style="left:271.40px;top:115.00px;font-size:7.00px;color:#555;">A</span>
<svg class="r" style="left:272.40px;top:116.40px;" width="8" height="8" viewBox="0 0 8 8"><path d="M3.4 5.2L6 2.2l1.7 1.5L5 6.7z" fill="#ee7f98"/><path d="M2.2 6.4l1.2-1.2L5 6.7 4.4 7.4H2.9z" fill="#f6b9c6"/></svg>
<span class="t" style="left:127.00px;top:135.00px;font-size:7.20px;color:#333;font-weight:700;">Ж</span>
<span class="t" style="left:141.00px;top:135.00px;font-size:7.20px;color:#333;font-style:italic;">К</span>
<span class="t" style="left:154.70px;top:134.00px;font-size:7.00px;color:#333;">П</span>
<div class="r" style="left:154.30px;top:141.20px;width:6.30px;height:0.90px;background:#444;"></div>
<svg class="r" style="left:164.70px;top:136.30px;" width="5" height="3" viewBox="0 0 5 3"><path d="M.7 .5h3.6L2.5 2.5z" fill="#555"/></svg>
<span class="t" style="left:174.90px;top:135.00px;font-size:6.60px;color:#444;letter-spacing:-0.571px;-webkit-text-stroke:0;">abc</span>
<div class="r" style="left:174.40px;top:137.90px;width:10.40px;height:0.45px;background:#8a8a8a;"></div>
<span class="t" style="left:189.40px;top:135.00px;font-size:7.40px;color:#333;">x</span>
<span class="t" style="left:193.80px;top:139.00px;font-size:4.20px;color:#2b6fc4;">2</span>
<span class="t" style="left:202.60px;top:135.00px;font-size:7.40px;color:#333;">x</span>
<span class="t" style="left:207.20px;top:134.00px;font-size:4.20px;color:#2b6fc4;">2</span>
<div class="r" style="left:214.00px;top:131.50px;width:0.80px;height:12.00px;background:#dcdcdc;"></div>
<svg class="r" style="left:218.60px;top:132.00px;" width="10" height="10" viewBox="0 0 10 10"><path d="M1.9 8.6L4.6 2h.8l2.7 6.600M2.900 6.400h4.200" fill="none" stroke="#7db4ee" stroke-width="1.700" opacity=".35"/><path d="M1.900 8.600L4.600 2h.8l2.700 6.600M2.900 6.400h4.200" fill="none" stroke="#3a7bd0" stroke-width=".7"/></svg>
<svg class="r" style="left:229.50px;top:136.30px;" width="5" height="3" viewBox="0 0 5 3"><path d="M.7 .5h3.6L2.5 2.5z" fill="#555"/></svg>
<svg class="r" style="left:240.00px;top:132.00px;" width="10" height="8" viewBox="0 0 10 8"><path d="M6.4.6l2 1.4-4 4.6-2-.2z" fill="#555"/><path d="M1.2 4.4h2.2" stroke="#555" stroke-width=".7"/><text x=".6" y="3.8" font-size="3.6" fill="#555" font-family="Liberation Sans">ab</text></svg>
<div class="r" style="left:240.00px;top:139.70px;width:9.40px;height:2.40px;background:#ffeb00;"></div>
<svg class="r" style="left:252.00px;top:136.30px;" width="5" height="3" viewBox="0 0 5 3"><path d="M.7 .5h3.6L2.5 2.5z" fill="#555"/></svg>
<span class="t" style="left:263.20px;top:133.00px;font-size:9.00px;color:#444;">A</span>
<div class="r" style="left:262.00px;top:139.90px;width:9.00px;height:2.30px;background:#e8000b;"></div>
<svg class="r" style="left:273.80px;top:136.30px;" width="5" height="3" viewBox="0 0 5 3"><path d="M.7 .5h3.6L2.5 2.5z" fill="#555"/></svg>
<span class="t" style="left:187.20px;top:152.00px;font-size:6.70px;color:#333333;letter-spacing:-0.173px;">Шрифт</span>
<svg class="r" style="left:278.50px;top:151.90px;" width="5" height="5" viewBox="0 0 5 5"><path d="M.6 3.2V.6H3.2M2 2l2.4 2.4M4.4 2.6v1.8H2.6" stroke="#666" stroke-width=".7" fill="none"/></svg>
<svg class="r" style="left:291.60px;top:114.60px;" width="10" height="11" viewBox="0 0 10 11"><g fill="#2b6fc4"><rect x=".4" y=".8" width="1.5" height="1.5"/><rect x=".4" y="4.4" width="1.5" height="1.5"/><rect x=".4" y="8" width="1.5" height="1.5"/></g><path d="M3.4 1.6h4.8M3.4 5.2h4.8M3.4 8.8h4.8" stroke="#8a8a8a" stroke-width=".8"/></svg>
<svg class="r" style="left:303.30px;top:119.10px;" width="5" height="3" viewBox="0 0 5 3"><path d="M.8 .6L2.5 2.2 4.2.6" stroke="#555" stroke-width=".8" fill="none"/></svg>
<svg class="r" style="left:313.40px;top:114.60px;" width="10" height="11" viewBox="0 0 10 11"><g fill="#2b6fc4" font-size="3.4" font-family="Liberation Sans"><text x="0" y="2.8">1</text><text x="0" y="6.4">2</text><text x="0" y="10">3</text></g><path d="M3.4 1.6h4.8M3.4 5.2h4.8M3.4 8.8h4.8" stroke="#8a8a8a" stroke-width=".8"/></svg>
<svg class="r" style="left:325.00px;top:119.10px;" width="5" height="3" viewBox="0 0 5 3"><path d="M.8 .6L2.5 2.2 4.2.6" stroke="#555" stroke-width=".8" fill="none"/></svg>
<svg class="r" style="left:334.40px;top:114.60px;" width="11" height="11" viewBox="0 0 11 11"><g fill="#2b6fc4" font-size="3.2" font-family="Liberation Sans"><text x="0" y="2.8">1</text><text x="2.2" y="6.4">a</text><text x="4.4" y="10">i</text></g><path d="M2.6 1.6h7M4.8 5.2h4.8M6.8 8.8h2.8" stroke="#8a8a8a" stroke-width=".8"/></svg>
<svg class="r" style="left:345.90px;top:119.10px;" width="5" height="3" viewBox="0 0 5 3"><path d="M.8 .6L2.5 2.2 4.2.6" stroke="#555" stroke-width=".8" fill="none"/></svg>
<div class="r" style="left:355.90px;top:113.00px;width:0.80px;height:12.50px;background:#dcdcdc;"></div>
<svg class="r" style="left:359.60px;top:115.00px;" width="10" height="10" viewBox="0 0 10 10"><path d="M.4 1h9M4.8 3.6h4.6M4.8 6h4.6M.4 8.6h9" stroke="#8a8a8a" stroke-width=".8"/><path d="M4 4.8H1M2.4 3.2L.8 4.8l1.6 1.6" stroke="#2b6fc4" stroke-width=".9" fill="none"/></svg>
<svg class="r" style="left:373.40px;top:115.00px;" width="10" height="10" viewBox="0 0 10 10"><path d="M.4 1h9M4.8 3.6h4.6M4.8 6h4.6M.4 8.6h9" stroke="#8a8a8a" stroke-width=".8"/><path d="M.6 4.8h3M2.2 3.2l1.6 1.6-1.6 1.6" stroke="#2b6fc4" stroke-width=".9" fill="none"/></svg>
<div class="r" style="left:386.10px;top:113.00px;width:0.80px;height:12.50px;background:#dcdcdc;"></div>
<svg class="r" style="left:391.60px;top:114.40px;" width="9" height="11" viewBox="0 0 9 11"><text x="0" y="4.2" font-size="4.6" fill="#2b6fc4" font-family="Liberation Sans" font-weight="700">А</text><text x="0" y="9.6" font-size="4.6" fill="#a448b8" font-family="Liberation Sans" font-weight="700">Я</text><path d="M6.2 .8v8.4M4.6 7.6l1.6 1.8 1.6-1.8" stroke="#666" stroke-width=".8" fill="none"/></svg>
<div class="r" style="left:404.10px;top:113.00px;width:0.80px;height:12.50px;background:#dcdcdc;"></div>
<span class="t" style="left:409.80px;top:117.00px;font-size:8.00px;color:#777;">¶</span>
<div class="r" style="left:290.10px;top:131.20px;width:11.90px;height:12.50px;background:#c8c8c8;border:1px solid #9a9a9a;box-sizing:border-box;"></div>
<svg class="r" style="left:292.20px;top:134.20px;" width="12" height="12" viewBox="0 0 12 12"><g stroke="#777" stroke-width="0.8" fill="none"><path d="M0.00 0.60h7.60"/><path d="M0.00 2.60h5.20"/><path d="M0.00 4.60h7.60"/><path d="M0.00 6.60h5.20"/></g></svg>
<svg class="r" style="left:305.60px;top:134.20px;" width="12" height="12" viewBox="0 0 12 12"><g stroke="#8a8a8a" stroke-width="0.8" fill="none"><path d="M0.00 0.60h8.00"/><path d="M1.40 2.60h5.20"/><path d="M0.00 4.60h8.00"/><path d="M1.40 6.60h5.20"/></g></svg>
<svg class="r" style="left:319.00px;top:134.20px;" width="12" height="12" viewBox="0 0 12 12"><g stroke="#8a8a8a" stroke-width="0.8" fill="none"><path d="M0.00 0.60h8.00"/><path d="M2.80 2.60h5.20"/><path d="M0.00 4.60h8.00"/><path d="M2.80 6.60h5.20"/></g></svg>
<svg class="r" style="left:331.80px;top:134.20px;" width="12" height="12" viewBox="0 0 12 12"><g stroke="#8a8a8a" stroke-width="0.8" fill="none"><path d="M0.00 0.60h8.00"/><path d="M0.00 2.60h8.00"/><path d="M0.00 4.60h8.00"/><path d="M0.00 6.60h8.00"/></g></svg>
<div class="r" style="left:344.10px;top:131.50px;width:0.80px;height:12.00px;background:#dcdcdc;"></div>
<svg class="r" style="left:349.00px;top:132.60px;" width="10" height="11" viewBox="0 0 10 11"><path d="M1.6 .8v8.6M.2 2.2L1.6.8 3 2.2M.2 8l1.4 1.4L3 8" stroke="#2b6fc4" stroke-width=".8" fill="none"/><path d="M4.4 2h5M4.4 4.4h5M4.4 6.8h5M4.4 9.2h5" stroke="#8a8a8a" stroke-width=".8"/></svg>
<svg class="r" style="left:360.00px;top:136.30px;" width="5" height="3" viewBox="0 0 5 3"><path d="M.7 .5h3.6L2.5 2.5z" fill="#555"/></svg>
<div class="r" style="left:369.80px;top:131.50px;width:0.80px;height:12.00px;background:#dcdcdc;"></div>
<svg class="r" style="left:374.00px;top:132.00px;" width="11" height="11" viewBox="0 0 11 11"><path d="M3.6 2.4L7.4 5.4 4.8 8.2 1.6 5.6z" fill="#fdfdfd" stroke="#666" stroke-width=".8"/><path d="M3.2 3V1.4a1 1 0 0 1 2 0v1.8" stroke="#666" stroke-width=".7" fill="none"/><path d="M8.2 5.6c.8 1.2 1 1.8.2 2.2-.8-.3-.7-1-.2-2.200z" fill="#2b6fc4"/><rect x=".6" y="9.2" width="9" height="1.6" fill="#fff" stroke="#999" stroke-width=".5"/></svg>
<svg class="r" style="left:386.10px;top:136.30px;" width="5" height="3" viewBox="0 0 5 3"><path d="M.7 .5h3.6L2.5 2.5z" fill="#555"/></svg>
<div class="r" style="left:394.10px;top:131.20px;width:20.90px;height:12.50px;background:#c8c8c8;border:1px solid #9a9a9a;box-sizing:border-box;"></div>
<svg class="r" style="left:396.60px;top:133.60px;" width="8" height="8" viewBox="0 0 8 8"><rect x=".4" y=".4" width="3.1" height="3.1" fill="#fff"/><rect x="4.1" y=".4" width="3.1" height="3.1" fill="#fff"/><rect x=".4" y="4.1" width="3.1" height="3.1" fill="#fff"/><rect x="4.1" y="4.1" width="3.1" height="3.1" fill="#fff"/></svg>
<svg class="r" style="left:407.90px;top:136.30px;" width="5" height="3" viewBox="0 0 5 3"><path d="M.7 .5h3.6L2.5 2.5z" fill="#444"/></svg>
<span class="t" style="left:341.00px;top:152.00px;font-size:6.70px;color:#333333;letter-spacing:-0.186px;">Абзац</span>
<svg class="r" style="left:416.20px;top:151.90px;" width="5" height="5" viewBox="0 0 5 5"><path d="M.6 3.2V.6H3.2M2 2l2.4 2.4M4.4 2.6v1.8H2.6" stroke="#666" stroke-width=".7" fill="none"/></svg>
<div class="r" style="left:428.40px;top:111.50px;width:457.50px;height:33.00px;background:#ffffff;border:1px solid #d0d0d0;box-sizing:border-box;"></div>
<div class="r" style="left:873.00px;top:111.50px;width:12.90px;height:33.00px;background:#f3f3f3;border:1px solid #ababab;box-sizing:border-box;"></div>
<svg class="r" style="left:876.40px;top:124.60px;" width="6" height="6" viewBox="0 0 6 6"><path d="M1 .8h4" stroke="#555" stroke-width=".7"/><path d="M1 2.4h4L3 4.8z" fill="#555"/></svg>
<div class="r" style="left:510.30px;top:112.20px;width:39.90px;height:31.40px;background:#ffffff;border:1.8px solid #c4c2c0;box-sizing:border-box;"></div>
<span class="t" style="left:433.00px;top:118.00px;font-size:11.60px;color:#111;font-family:'Liberation Serif', serif;font-weight:700;letter-spacing:0.260px;">АаБбІ</span>
<span class="t" style="left:432.60px;top:135.00px;font-size:6.40px;color:#4a4a4a;letter-spacing:0.109px;-webkit-text-stroke:.08px #4a4a4a;">Заголово...</span>
<span class="t" style="left:473.60px;top:118.00px;font-size:11.20px;color:#111;font-family:'Liberation Serif', serif;font-weight:700;letter-spacing:-0.291px;">АаБбВ</span>
<span class="t" style="left:473.00px;top:135.00px;font-size:6.40px;color:#4a4a4a;letter-spacing:0.109px;-webkit-text-stroke:.08px #4a4a4a;">Заголово...</span>
<span class="t" style="left:514.00px;top:119.00px;font-size:9.00px;color:#111;font-family:'Liberation Serif', serif;letter-spacing:-0.149px;">АаБбВвІ</span>
<span class="t" style="left:514.40px;top:135.00px;font-size:6.40px;color:#4a4a4a;letter-spacing:0.002px;-webkit-text-stroke:.08px #4a4a4a;">1 Звичай...</span>
<span class="t" style="left:554.40px;top:118.00px;font-size:11.60px;color:#111;font-family:'Liberation Serif', serif;font-weight:700;letter-spacing:0.160px;">АаБбІ</span>
<span class="t" style="left:561.50px;top:135.00px;font-size:6.40px;color:#4a4a4a;letter-spacing:-0.144px;-webkit-text-stroke:.08px #4a4a4a;">Назва</span>
<span class="t" style="left:594.00px;top:119.00px;font-size:9.00px;color:#111;font-family:'Liberation Serif', serif;letter-spacing:-0.082px;">АаБбВвІ</span>
<span class="t" style="left:593.00px;top:135.00px;font-size:6.40px;color:#4a4a4a;letter-spacing:0.016px;-webkit-text-stroke:.08px #4a4a4a;">Paragraph...</span>
<span class="t" style="left:634.40px;top:119.00px;font-size:9.00px;color:#111;font-family:'Liberation Serif', serif;letter-spacing:-0.149px;">АаБбВвІ</span>
<span class="t" style="left:633.60px;top:135.00px;font-size:6.40px;color:#4a4a4a;letter-spacing:-0.049px;-webkit-text-stroke:.08px #4a4a4a;">1 Без інте...</span>
<span class="t" style="left:675.00px;top:120.00px;font-size:7.50px;color:#47639a;letter-spacing:0.523px;-webkit-text-stroke:0;">АаБбВвІ</span>
<span class="t" style="left:674.00px;top:135.00px;font-size:6.40px;color:#4a4a4a;letter-spacing:0.109px;-webkit-text-stroke:.08px #4a4a4a;">Заголово...</span>
<span class="t" style="left:715.00px;top:120.00px;font-size:7.20px;color:#6a6a6a;letter-spacing:0.470px;-webkit-text-stroke:0;">АаБбВвГ</span>
<span class="t" style="left:714.00px;top:135.00px;font-size:6.40px;color:#4a4a4a;letter-spacing:0.057px;-webkit-text-stroke:.08px #4a4a4a;">Підзаголо...</span>
<span class="t" style="left:755.60px;top:120.00px;font-size:7.40px;color:#4a4a4a;font-style:italic;letter-spacing:0.258px;-webkit-text-stroke:0;">АаБбВвГ</span>
<span class="t" style="left:756.00px;top:135.00px;font-size:6.40px;color:#4a4a4a;letter-spacing:0.015px;-webkit-text-stroke:.08px #4a4a4a;">Слабке в...</span>
<span class="t" style="left:795.60px;top:120.00px;font-size:7.40px;color:#222;font-weight:700;font-style:italic;letter-spacing:-0.173px;-webkit-text-stroke:0;">АаБбВвГ</span>
<span class="t" style="left:797.00px;top:135.00px;font-size:6.40px;color:#4a4a4a;letter-spacing:-0.054px;-webkit-text-stroke:.08px #4a4a4a;">Виділення</span>
<span class="t" style="left:836.00px;top:120.00px;font-size:7.40px;color:#4f86d6;font-style:italic;letter-spacing:0.224px;-webkit-text-stroke:0;">АаБбВвГ</span>
<span class="t" style="left:836.00px;top:135.00px;font-size:6.40px;color:#4a4a4a;letter-spacing:-0.027px;-webkit-text-stroke:.08px #4a4a4a;">Сильне в...</span>
<span class="t" style="left:645.60px;top:152.00px;font-size:6.70px;color:#333333;letter-spacing:-0.562px;">Стилі</span>
<svg class="r" style="left:884.90px;top:151.90px;" width="5" height="5" viewBox="0 0 5 5"><path d="M.6 3.2V.6H3.2M2 2l2.4 2.4M4.4 2.6v1.8H2.6" stroke="#666" stroke-width=".7" fill="none"/></svg>
<svg class="r" style="left:898.40px;top:112.60px;" width="9" height="9" viewBox="0 0 9 9"><g fill="none" stroke="#2b6fc4" stroke-width="1"><circle cx="5.4" cy="3.4" r="2.5"/><path d="M3.6 5.2L.8 8"/></g></svg>
<span class="t" style="left:909.30px;top:113.00px;font-size:6.70px;color:#333333;letter-spacing:0.375px;">Пошук</span>
<svg class="r" style="left:939.00px;top:114.90px;" width="5" height="3" viewBox="0 0 5 3"><path d="M.7 .5h3.6L2.5 2.5z" fill="#555"/></svg>
<svg class="r" style="left:897.60px;top:124.60px;" width="11" height="10" viewBox="0 0 11 10"><text x=".4" y="4.2" font-size="5.2" fill="#7a3fa0" font-family="Liberation Sans">ab</text><text x="3.2" y="9.4" font-size="5.2" fill="#2b6fc4" font-family="Liberation Sans">ac</text><path d="M1.200 5.400v2.400h1.600M2 7l.9.800-.9.800" stroke="#2b6fc4" stroke-width=".6" fill="none"/></svg>
<span class="t" style="left:909.30px;top:126.00px;font-size:6.70px;color:#333333;letter-spacing:-0.032px;">Замінити</span>
<svg class="r" style="left:899.60px;top:137.40px;" width="8" height="9" viewBox="0 0 8 9"><path d="M1.2.8v6l1.6-1.4 1 2.4 1-.4-1-2.4h2z" fill="#fdfdfd" stroke="#666" stroke-width=".7"/></svg>
<span class="t" style="left:909.30px;top:139.00px;font-size:6.70px;color:#333333;letter-spacing:-0.196px;">Виділити</span>
<svg class="r" style="left:937.90px;top:140.10px;" width="5" height="3" viewBox="0 0 5 3"><path d="M.7 .5h3.6L2.5 2.5z" fill="#555"/></svg>
<span class="t" style="left:903.70px;top:152.00px;font-size:6.70px;color:#333333;letter-spacing:-0.364px;">Редагування</span>
<svg class="r" style="left:969.60px;top:112.40px;" width="17" height="17" viewBox="0 0 17 17"><g fill="none" stroke="#4d7fd8" stroke-width="1"><path d="M1.6 1.4h6.2l3 3v2.2M1.6 1.400V11.600H6.200" /><path d="M3.600 8.400c1.400-1.200 2.600-3.600 2.400-4.800-.8-.4-.8 1.400.4 3 .8 1 2 1.600 2.600 1.200.2-.8-2.600-.6-5.400 .6z" stroke-width=".6"/><rect x="6.8" y="9.200" width="5.200" height="2.800" rx="1.400" transform="rotate(-45 9.400 10.600)"/><rect x="10.400" y="5.600" width="5.200" height="2.800" rx="1.400" transform="rotate(-45 13 7)"/></g></svg>
<span class="t" style="left:963.90px;top:133.00px;font-size:6.70px;color:#333333;letter-spacing:-0.255px;">Создать</span>
<span class="t" style="left:969.80px;top:141.00px;font-size:6.70px;color:#333333;letter-spacing:-0.600px;">PDF</span>
<span class="t" style="left:954.70px;top:152.00px;font-size:6.70px;color:#333333;letter-spacing:-0.152px;">Adobe Acrobat</span>
<div class="r" style="left:1018.5px;top:116.6px;width:5.6px;height:5.6px;border-radius:50%;background:#ff8c00;"></div>
<span class="t" style="left:1005.60px;top:133.00px;font-size:6.70px;color:#333333;letter-spacing:-0.225px;">Надбудови</span>
<span class="t" style="left:1005.60px;top:152.00px;font-size:6.70px;color:#333333;letter-spacing:-0.225px;">Надбудови</span>
<svg class="r" style="left:1068.00px;top:153.00px;" width="7" height="5" viewBox="0 0 7 5"><path d="M.8 4L3.500 1.200 6.200 4" stroke="#444" stroke-width=".8" fill="none"/></svg>
<svg class="r" style="left:1148.00px;top:92.00px;" width="160" height="90" viewBox="0 0 160 90"><defs><filter id="b1" x="-10%" y="-10%" width="120%" height="120%"><feGaussianBlur stdDeviation="1.1"/></filter><filter id="b2" x="-10%" y="-10%" width="120%" height="120%"><feGaussianBlur stdDeviation="2.2"/></filter><filter id="b0" x="-10%" y="-10%" width="120%" height="120%"><feGaussianBlur stdDeviation=".55"/></filter><linearGradient id="w1" x1="0" y1="0" x2="1" y2=".4"><stop offset="0" stop-color="#cdb9ae"/><stop offset=".55" stop-color="#c1ab9f"/><stop offset="1" stop-color="#ad978c"/></linearGradient><clipPath id="c1"><path d="M5 0H155a5 5 0 0 1 5 5V90H0V5a5 5 0 0 1 5-5z"/></clipPath></defs><g clip-path="url(#c1)"><rect width="160" height="90" fill="url(#w1)"/><g filter="url(#b0)"><rect x="-2" y="-2" width="58" height="94" fill="#8d93a0"/><rect x="54.500" y="-2" width="2.200" height="60" fill="#cfd0d4"/><path d="M-2 76H22V92H-2z" fill="#d5d2ce"/><path d="M12 9c8 0 15 4 18 10l6 12c-6-2-10-2-14-6z" fill="#d3dbe6"/><path d="M18 19c6 2 12 8 16 16l-2 6c-6-6-12-10-18-12z" fill="#c3ccd9"/><path d="M0 10c3 0 6 1 8 3l-6 6H0z" fill="#c9d2de"/><path d="M0 22c3 4 4 10 2 16H0z" fill="#c3ccd9"/><path d="M4 48c4-4 10-6 16-6l10-6 2 6c-6 6-14 10-22 12-4 4-6 8-6 12l-4-2z" fill="#aeb8c8"/><rect x="7.500" y="17" width="8.500" height="13" fill="#d9a35c"/><path d="M9.600 17v13M11.800 17v13M14 17v13" stroke="#b27b3c" stroke-width=".6"/><path d="M0 58c12 0 24-6 33-14l2 4C26 58 12 64 0 66z" fill="#d2ab63"/><path d="M38 8l10 26M36 14l12 30" stroke="#7c8290" stroke-width="1.400"/></g><g filter="url(#b1)"><path d="M35 92c-4-14-2-28 5-40 6-12 17-20 30-20 13 0 23 7 29 19 5 11 6 26 1 41z" fill="#754737"/><path d="M44 40c6-6 16-9 26-9 10 0 20 5 26 14-8-5-16-7-26-7-10 0-18 1-26 2z" fill="#5f392c"/><ellipse cx="67.500" cy="76" rx="19.500" ry="26" fill="#d7a797"/><path d="M46 64c2-10 12-15 24-14 8 1 15 5 18 13-7-5-13-6-20-6-8 0-15 2-22 7z" fill="#7d4d3b"/><path d="M53 66h11M71 66h11" stroke="#5d4037" stroke-width="1.800" opacity=".75"/><path d="M52 62h12M71 62h12" stroke="#8a5b4a" stroke-width="1" opacity=".6"/></g><rect x="3" y="69" width="77" height="19" rx="3.500" fill="#3a3a3a" opacity=".82"/></g></svg>
<span class="t" style="left:1154.30px;top:165.00px;font-size:12.80px;color:#fff;letter-spacing:-0.166px;-webkit-text-stroke:.08px #fff;">Наталія Год</span>
<svg class="r" style="left:1148.00px;top:182.00px;" width="160" height="90" viewBox="0 0 160 90"><defs><linearGradient id="w2" x1="0" y1="0" x2="1" y2="0"><stop offset="0" stop-color="#d6cdb9"/><stop offset=".2" stop-color="#e2dccb"/><stop offset=".8" stop-color="#e3dfd2"/><stop offset=".93" stop-color="#d2cdbf"/><stop offset=".96" stop-color="#a49e91"/><stop offset="1" stop-color="#bdb7a9"/></linearGradient></defs><rect width="160" height="90" fill="url(#w2)"/><linearGradient id="w2b" x1="0" y1="0" x2="0" y2="1"><stop offset=".5" stop-color="#9aa39c" stop-opacity="0"/><stop offset="1" stop-color="#9aa39c" stop-opacity=".55"/></linearGradient><rect width="160" height="90" fill="url(#w2b)"/><g filter="url(#b2)"><rect x="38" y="6" width="74" height="23" fill="#1c5394"/><rect x="35" y="29" width="78" height="27" fill="#e8d285"/></g><g filter="url(#b1)"><path d="M48 92c3-10 5-20 6-32 1-14 3-28 9-38 4-8 11-13 19-13s15 5 19 13c5 10 7 22 8 36 1 12 3 24 6 34z" fill="#604230"/><path d="M28 92c2-12 8-22 18-28l14-5h42l14 7c10 6 15 14 17 26z" fill="#1d1d1d"/><path d="M54 92c2-14 2-24 5-36h10v36z" fill="#563a2a"/><path d="M92 92V56h10c3 10 5 24 8 36z" fill="#563a2a"/><ellipse cx="80.500" cy="35" rx="17.500" ry="23.500" fill="#e3c1b1"/><path d="M62 30c1-12 8-19 19-19 10 0 17 7 18 19-5-8-11-11-18-11s-13 3-19 11z" fill="#684733"/><path d="M68 32h9M85 33h9" stroke="#54403a" stroke-width="1.800" opacity=".8"/><path d="M78 52c2 1 5 1 7 0" stroke="#b98578" stroke-width="1.400" opacity=".8"/><path d="M60 56c-2-6 1-11 6-13 6-2 13-1 18 3l5 9c2 6 0 11-3 14H69c-5-2-8-7-9-13z" fill="#ebd4cb"/><path d="M66 45v10M72 43v11M78 44v10" stroke="#d3b3a8" stroke-width=".9" opacity=".8"/></g><rect x="3" y="69" width="160" height="19" rx="3.500" fill="#3a3a3a" opacity=".82"/></svg>
<svg class="r" style="left:1152.60px;top:253.00px;" width="15" height="15" viewBox="0 0 15 15"><g fill="#f0545c"><rect x="4.300" y="1.200" width="6.400" height="8.400" rx="3.200"/><path d="M3 6.600h1.200c0 2.200 1.300 3.500 3.300 3.500s3.300-1.300 3.300-3.500H12c0 2.600-1.500 4.300-3.800 4.600v1h2v1.200H4.800v-1.200h2v-1C4.500 10.900 3 9.200 3 6.600z"/></g><path d="M.8 14L14 .6" stroke="#f0545c" stroke-width="1.300"/><path d="M1.700 14.900L14.900 1.500" stroke="#333" stroke-width=".7" opacity=".6"/></svg>
<span class="t" style="left:1172.40px;top:255.00px;font-size:12.80px;color:#fff;letter-spacing:-0.162px;-webkit-text-stroke:.08px #fff;">Кафедра всесвітньої...</span>
<svg class="r" style="left:1147.00px;top:271.00px;" width="162" height="92" viewBox="0 0 162 92"><rect width="162" height="92" fill="#05f283"/><svg x="2" y="2" width="158" height="88" viewBox="0 0 158 88"><rect width="158" height="88" fill="#d4dcd5"/><g filter="url(#b0)"><rect x="-2" y="-2" width="16" height="92" fill="#d2d3d3"/><path d="M-2 26l16-4M-2 64l14-3" stroke="#b8b9b9" stroke-width=".8"/><path d="M8 88L20-2h48V88z" fill="#a5611a"/><path d="M26-2h38v11L24 15z" fill="#b5ae9c"/><path d="M18 20l48-10v4L18 25z" fill="#c98636"/><path d="M22 30l40-6v60H16z" fill="#b56f22"/><path d="M28 36l14-2v46H24z" fill="#c27c2c"/><path d="M46 33l14-2v48H46z" fill="#bd7727"/><rect x="30" y="41" width="16.500" height="23" fill="#d4d9da"/><path d="M32 45h12M32 49h12M32 53h8M32 58h12" stroke="#9aa4ac" stroke-width="1"/><path d="M70-2h90v70H70z" fill="#d5ddd6"/><path d="M100 10l12 8-8 8z" fill="#e6ece6" opacity=".8"/><rect x="127" y="26" width="5" height="18" fill="#e9eee8" opacity=".8"/><rect x="150" y="2" width="4" height="16" fill="#e9eee8" opacity=".7"/></g><g filter="url(#b1)"><path d="M20 90c2-12 10-20 22-24l22-8h34l30 6c12 4 18 12 22 26z" fill="#2b2b2e"/><path d="M64 90l4-22h22l6 22z" fill="#7d8097"/><rect x="47" y="27" width="10" height="30" rx="4.500" fill="#191919"/><rect x="97" y="23" width="9" height="32" rx="4.500" fill="#191919"/><path d="M52 32C50 12 62 2 78 2s28 10 24 28" fill="none" stroke="#1b1b1b" stroke-width="3"/><path d="M56 40c-1-8 0-16 2-22 3-8 10-12 19-12 10 0 18 4 21 12 2 6 2 14 1 22-1 12-4 22-10 28-4 4-8 6-12 6s-8-2-12-6c-6-6-8-16-9-28z" fill="#c99a8b"/><path d="M54 30c-2-12 4-24 22-24 16 0 26 8 23 22-3-8-8-12-14-12-10 0-20 2-26 6z" fill="#29231f"/><path d="M62 40h11M82 40h11" stroke="#5b3f38" stroke-width="1.800" opacity=".7"/><path d="M70 64c4-2 12-2 16 0-2 4-14 4-16 0z" fill="#8a4a44"/><path d="M66 60c6-4 18-4 24 0" stroke="#9a6a58" stroke-width="2" fill="none" opacity=".6"/></g><rect x="2" y="68" width="118.500" height="19" rx="3.500" fill="#3a3a3a" opacity=".82"/></svg></svg>
<span class="t" style="left:1154.30px;top:345.00px;font-size:12.80px;color:#fff;letter-spacing:0.014px;-webkit-text-stroke:.08px #fff;">Дмитро Бульченко</span>
<div class="r" style="left:1148.00px;top:363.00px;width:160.00px;height:89.00px;background:#222222;"></div>
<svg class="r" style="left:1194.00px;top:363.00px;" width="68" height="89" viewBox="0 0 68 89"><rect width="68" height="89" fill="#c6c6c4"/><g filter="url(#b1)"><path d="M0 0h22l6 36-8 30-20 8z" fill="#908e8a"/><path d="M0 0h12l8 40-20 30z" fill="#7f7d79"/><path d="M14 0h54v34H26z" fill="#cfcfcd"/><circle cx="51" cy="9" r="2" fill="#5a5852"/><path d="M14 2c2 4 6 6 12 6 2-2 2-4 0-6z" fill="#6a675f"/><rect x="50" y="30" width="20" height="28" fill="#1a1a1a"/><path d="M22 34h30v30H22z" fill="#a8a6a2"/><path d="M0 89V72c6-10 16-14 26-16h22c8 2 16 6 22 12v21z" fill="#4b6988"/><ellipse cx="40" cy="47" rx="12.500" ry="16" fill="#b59485"/><path d="M27 42c-1-8 5-13 13-13 7 0 13 4 12 12-4-4-8-5-12-5s-9 2-13 6z" fill="#2b2522"/><path d="M30 43h8M43 43h8" stroke="#3a2e2a" stroke-width="1.600" opacity=".8"/><path d="M30 64c4 6 16 6 20 0v8H30z" fill="#a88878"/></g></svg>
<div class="r" style="left:1151.00px;top:430.70px;width:125.00px;height:19.10px;background:rgba(50,50,50,.8);border-radius:3.500px;"></div>
<svg class="r" style="left:1152.60px;top:433.00px;" width="15" height="15" viewBox="0 0 15 15"><g fill="#f0545c"><rect x="4.300" y="1.200" width="6.400" height="8.400" rx="3.200"/><path d="M3 6.600h1.200c0 2.200 1.300 3.500 3.300 3.500s3.300-1.300 3.300-3.500H12c0 2.600-1.500 4.300-3.800 4.600v1h2v1.200H4.800v-1.200h2v-1C4.500 10.900 3 9.200 3 6.600z"/></g><path d="M.8 14L14 .6" stroke="#f0545c" stroke-width="1.300"/><path d="M1.700 14.900L14.900 1.500" stroke="#333" stroke-width=".7" opacity=".6"/></svg>
<span class="t" style="left:1172.40px;top:435.00px;font-size:12.80px;color:#fff;letter-spacing:-0.222px;-webkit-text-stroke:.08px #fff;">iPhone (Наталия)</span>
<div class="r" style="left:1148.00px;top:452.00px;width:160.00px;height:90.00px;background:#222222;"></div>
<div class="r" style="left:1151.30px;top:520.80px;width:97.70px;height:18.80px;background:#2b2b2b;border-radius:3.500px;"></div>
<svg class="r" style="left:1152.60px;top:523.00px;" width="15" height="15" viewBox="0 0 15 15"><g fill="#f0545c"><rect x="4.300" y="1.200" width="6.400" height="8.400" rx="3.200"/><path d="M3 6.600h1.200c0 2.200 1.300 3.500 3.300 3.500s3.300-1.300 3.300-3.500H12c0 2.600-1.500 4.300-3.800 4.600v1h2v1.200H4.800v-1.200h2v-1C4.500 10.900 3 9.200 3 6.600z"/></g><path d="M.8 14L14 .6" stroke="#f0545c" stroke-width="1.300"/><path d="M1.700 14.900L14.900 1.500" stroke="#333" stroke-width=".7" opacity=".6"/></svg>
<span class="t" style="left:1172.50px;top:525.00px;font-size:12.80px;color:#fff;letter-spacing:-0.182px;-webkit-text-stroke:.08px #fff;">Yuliia Pomaz</span>
<span class="t" style="left:1167.00px;top:580.00px;font-size:14.60px;color:#fff;font-weight:700;letter-spacing:0.118px;-webkit-text-stroke:0;">Дар&#x27;я Тарасенко</span>
<div class="r" style="left:1151.30px;top:610.80px;width:125.70px;height:18.80px;background:#222528;border-radius:3.500px;"></div>
<svg class="r" style="left:1152.60px;top:613.00px;" width="15" height="15" viewBox="0 0 15 15"><g fill="#f0545c"><rect x="4.300" y="1.200" width="6.400" height="8.400" rx="3.200"/><path d="M3 6.600h1.200c0 2.200 1.300 3.500 3.300 3.500s3.300-1.300 3.300-3.500H12c0 2.600-1.500 4.300-3.800 4.600v1h2v1.200H4.800v-1.200h2v-1C4.500 10.900 3 9.200 3 6.600z"/></g><path d="M.8 14L14 .6" stroke="#f0545c" stroke-width="1.300"/><path d="M1.700 14.900L14.900 1.500" stroke="#333" stroke-width=".7" opacity=".6"/></svg>
<span class="t" style="left:1172.50px;top:615.00px;font-size:12.80px;color:#fff;letter-spacing:0.084px;-webkit-text-stroke:.08px #fff;">Дар&#x27;я Тарасенко</span>
</div></body></html>
